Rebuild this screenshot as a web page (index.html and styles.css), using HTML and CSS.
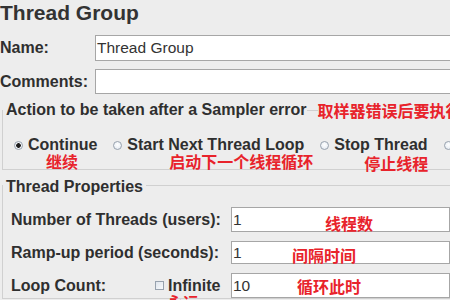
FILE: index.html
```html
<!DOCTYPE html>
<html lang="en">
<head>
<meta charset="utf-8">
<title>Thread Group</title>
<link rel="stylesheet" href="styles.css">
</head>
<body>
<main class="panel">
  <h1 class="title">Thread Group</h1>

  <div class="field-row name-row">
    <span class="field-label">Name:</span>
    <div class="text-field">Thread Group</div>
  </div>
  <div class="field-row comments-row">
    <span class="field-label">Comments:</span>
    <div class="text-field comments-field"></div>
  </div>

  <fieldset class="group action-group">
    <legend class="group-legend">
      <span class="legend-text">Action to be taken after a Sampler error</span>
      <span class="legend-rule"></span>
      <span class="note legend-note">取样器错误后要执行</span>
    </legend>
    <div class="options">
      <div class="option">
        <span class="option-line"><span class="radio checked"></span>Continue</span>
        <span class="note option-note note-continue">继续</span>
      </div>
      <div class="option">
        <span class="option-line"><span class="radio"></span>Start Next Thread Loop</span>
        <span class="note option-note note-next">启动下一个线程循环</span>
      </div>
      <div class="option">
        <span class="option-line"><span class="radio"></span>Stop Thread</span>
        <span class="note option-note note-stop">停止线程</span>
      </div>
      <div class="option">
        <span class="option-line"><span class="radio"></span>Stop Test</span>
      </div>
    </div>
  </fieldset>

  <fieldset class="group props-group">
    <legend class="group-legend props-legend">
      <span class="legend-text">Thread Properties</span>
    </legend>
    <div class="props">
      <div class="prop-row">
        <span class="prop-label">Number of Threads (users):</span>
        <div class="prop-field">
          <span class="value">1</span>
          <span class="note field-note note-threads">线程数</span>
        </div>
      </div>
      <div class="prop-row ramp-row">
        <span class="prop-label">Ramp-up period (seconds):</span>
        <div class="prop-field ramp-field">
          <span class="value">1</span>
          <span class="note field-note note-ramp">间隔时间</span>
        </div>
      </div>
      <div class="prop-row loop-row">
        <span class="prop-label loop-label">
          <span class="loop-text">Loop Count:</span>
          <span class="infinite">
            <span class="infinite-line"><span class="checkbox"></span>Infinite</span>
            <span class="note infinite-note">永远</span>
          </span>
        </span>
        <div class="prop-field">
          <span class="value">10</span>
          <span class="note field-note note-loop">循环此时</span>
        </div>
      </div>
    </div>
  </fieldset>
</main>
</body>
</html>
```

FILE: styles.css
```css
html, body {
  margin: 0;
  padding: 0;
}

body {
  width: 450px;
  height: 300px;
  overflow: hidden;
  background: #ededed;
  font-family: "Liberation Sans", Arial, sans-serif;
  color: #2f2f2f;
}

.panel {
  width: 450px;
}

.title {
  margin: 1px 0 0 0;
  font-size: 21px;
  line-height: 24px;
  font-weight: bold;
  color: #333;
}

.field-row {
  display: flex;
  align-items: center;
  margin-right: -20px;
}

.name-row {
  margin-top: 10px;
}

.comments-row {
  margin-top: 8px;
}

.field-label {
  flex: none;
  width: 95px;
  font-size: 16px;
  line-height: 18px;
  font-weight: bold;
}

.text-field {
  flex: 1;
  display: flex;
  align-items: center;
  box-sizing: border-box;
  height: 26px;
  padding: 0 1px;
  border: 1px solid #a6a6a6;
  background: #fff;
  font-size: 15.5px;
  color: #333;
  white-space: nowrap;
}

.comments-field {
  height: 25px;
}

.note {
  font-family: "Noto Sans CJK SC", "Liberation Sans", sans-serif;
  font-weight: bold;
  font-size: 16px;
  line-height: 15px;
  color: #e8232b;
  white-space: nowrap;
}

.group {
  min-width: 0;
  margin: 0 -40px 0 2px;
  padding: 0;
  border: 1px solid #d0d0d0;
}

.group-legend {
  display: flex;
  align-items: center;
  padding: 0 3px;
  font-size: 16px;
  line-height: 18px;
  font-weight: bold;
  white-space: nowrap;
}

.legend-rule {
  width: 11px;
  border-top: 1px solid #d0d0d0;
}

.legend-note {
  line-height: 18px;
}

.action-group {
  margin-top: 7px;
}

.options {
  display: flex;
  gap: 16px;
  padding: 17px 0 0 11px;
}

.option {
  display: flex;
  flex-direction: column;
}

.option-line {
  display: flex;
  align-items: center;
  gap: 5px;
  font-size: 16px;
  line-height: 18px;
  font-weight: bold;
  white-space: nowrap;
}

.radio {
  flex: none;
  width: 9px;
  height: 9px;
  box-sizing: border-box;
  border-radius: 50%;
  border: 1px solid #98a2ae;
  background: radial-gradient(circle at 50% 40%, #ffffff 0%, #e9eef4 70%, #d9e0e8 100%);
}

.radio.checked {
  background: radial-gradient(circle, #1e1e1e 0 2px, #f3f5f8 2.6px, #e3e8ee 100%);
}

.option-note {
  width: 0;
  height: 15px;
}

.note-continue {
  margin-left: 32px;
}

.note-next {
  margin-left: 56px;
}

.note-stop {
  margin-left: 44px;
  margin-top: 2px;
  margin-bottom: -2px;
}

.props-group {
  margin-top: 5px;
}

.props-legend {
  padding: 3px 3px 0;
}

.props {
  display: flex;
  flex-direction: column;
  gap: 9px;
  padding: 11px 0 0 8px;
}

.prop-row {
  display: grid;
  grid-template-columns: 220px 219px;
  align-items: center;
}

.prop-label {
  font-size: 16px;
  line-height: 18px;
  font-weight: bold;
  white-space: nowrap;
}

.loop-label {
  display: flex;
  align-items: flex-start;
}

.loop-text {
  width: 144px;
}

.infinite {
  display: flex;
  flex-direction: column;
}

.infinite-line {
  display: flex;
  align-items: center;
  gap: 4px;
}

.checkbox {
  width: 9px;
  height: 9px;
  box-sizing: border-box;
  border: 1px solid #98a2ae;
  background: linear-gradient(135deg, #dfe5ec, #f8fafc);
}

.infinite-note {
  width: 0;
  height: 0;
  margin-left: 12px;
}

.prop-field {
  display: grid;
  align-items: center;
  box-sizing: border-box;
  height: 25px;
  padding: 0 1px;
  border: 1px solid #a6a6a6;
  background: #fff;
  font-size: 15.5px;
  color: #333;
}

.prop-field > * {
  grid-area: 1 / 1;
}

.ramp-field {
  height: 23px;
}

.field-note {
  width: 0;
}

.note-threads {
  margin: 8px 0 0 92px;
}

.note-ramp {
  margin: 6px 0 0 59px;
}

.note-loop {
  margin: 1px 0 0 64px;
}
```
